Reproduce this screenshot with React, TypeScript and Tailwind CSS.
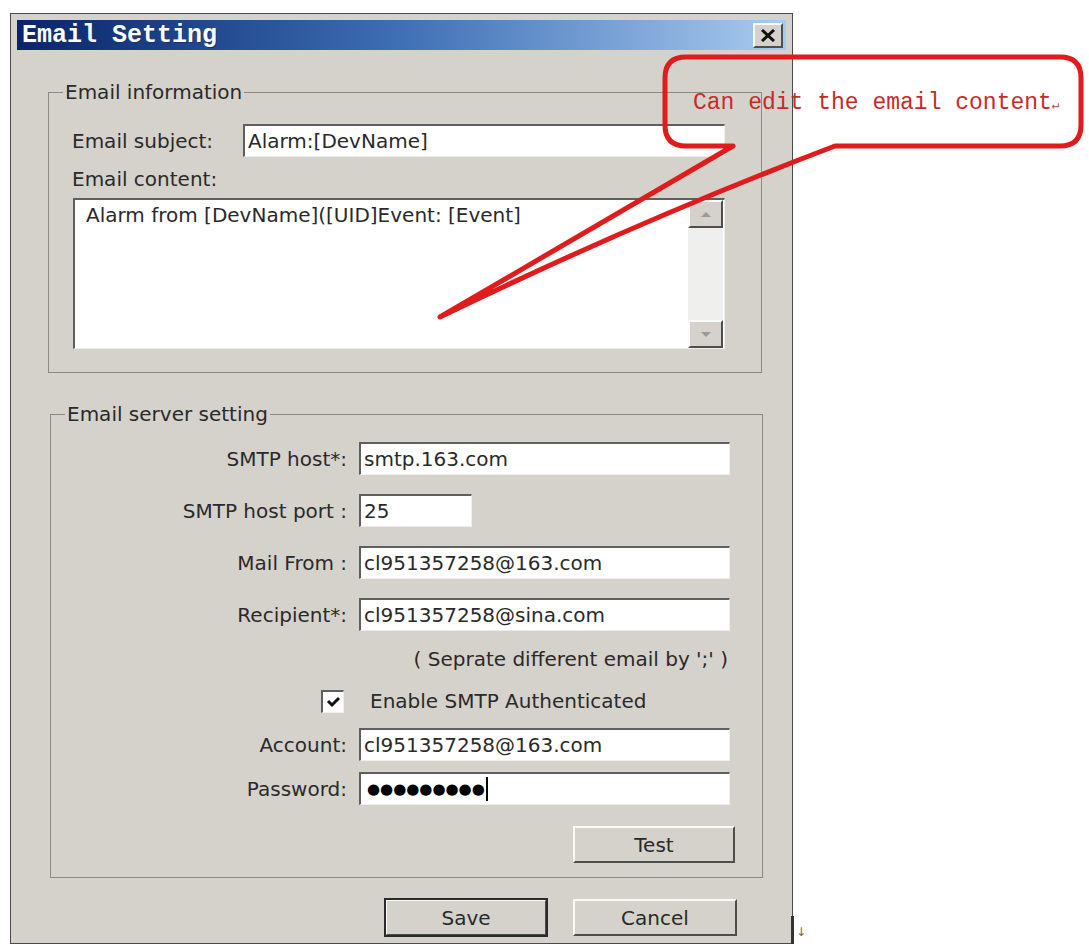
import type { ReactNode } from "react";

// classic 3D bevels
const sunken =
  "bg-white border-t-2 border-l-2 border-b border-r border-t-[#5f5f5f] border-l-[#5f5f5f] border-b-[#efeeeb] border-r-[#efeeeb]";
const raised =
  "bg-[#d5d2cc] border-2 border-t-[#fafafa] border-l-[#fafafa] border-b-[#4e4e4e] border-r-[#4e4e4e]";

function TextBox({ children, className }: { children: ReactNode; className: string }) {
  return (
    <div className={`${sunken} h-[33px] flex items-center pl-[3px] text-[20px] leading-none ${className}`}>
      {children}
    </div>
  );
}

function ServerRow({ label, children }: { label: string; children: ReactNode }) {
  return (
    <div className="flex items-center">
      <span className="w-[296px] text-right leading-[24px]">{label}</span>
      <div className="ml-[12px]">{children}</div>
    </div>
  );
}

function Button({ label, primary = false, className = "" }: { label: string; primary?: boolean; className?: string }) {
  return (
    <div
      className={`${raised} h-[37px] flex items-center justify-center text-[20px] ${
        primary ? "outline-2 outline-[#2a2a2a] -outline-offset-1" : ""
      } ${className}`}
    >
      {label}
    </div>
  );
}

function ArrowButton({ up }: { up?: boolean }) {
  return (
    <div className={`${raised} h-[28px] flex items-center justify-center`}>
      <svg width="12" height="7" viewBox="0 0 12 7">
        {up ? (
          <path d="M1 6 L6 1 L11 6 Z" fill="#9a9a9a" />
        ) : (
          <path d="M1 1 L6 6 L11 1 Z" fill="#9a9a9a" />
        )}
      </svg>
    </div>
  );
}

export default function App() {
  return (
    <div className="relative min-h-screen bg-white pt-[13px] pl-[10px] font-['DejaVu_Sans',sans-serif] text-[#2a2a2a]">
      <div className="flex items-end">
        {/* dialog window */}
        <div className="w-[783px] border border-[#4a4a4a] bg-[#d5d2cc] px-[6px] pt-[6px] pb-[7px]">
          {/* title bar */}
          <div className="h-[30px] flex items-center justify-between pl-[5px] pr-[3px] bg-linear-to-r from-[#0a246a] via-[#3f6fb5] to-[#a9cbee]">
            <span className="font-['Liberation_Mono',monospace] font-bold text-[25px] leading-none text-white [text-shadow:1px_1px_0_#1b2f6a]">
              Email Setting
            </span>
            <div className={`${raised} w-[30px] h-[25px] flex items-center justify-center`}>
              <svg width="16" height="13" viewBox="0 0 16 13">
                <path d="M2 1 L14 12 M14 1 L2 12" stroke="#111" strokeWidth="3" />
              </svg>
            </div>
          </div>

          {/* Email information */}
          <fieldset className="ml-[31px] mt-[30px] w-[714px] border border-[#8c8983]">
            <legend className="ml-[14px] px-[2px] text-[20px] leading-[24px]">Email information</legend>
            <div className="pl-[23px] pt-[20px] pb-[23px] text-[20px]">
              <div className="flex items-center">
                <span className="w-[171px] leading-[24px]">Email subject:</span>
                <TextBox className="w-[482px] h-[32px]">Alarm:[DevName]</TextBox>
              </div>
              <div className="mt-[10px] leading-[24px]">Email content:</div>
              <div className={`${sunken} mt-[7px] ml-[1px] w-[652px] h-[151px] flex`}>
                <div className="flex-1 pl-[11px] pt-[3px] leading-[24px]">
                  Alarm from [DevName]([UID]Event: [Event]
                </div>
                <div className="w-[35px] flex flex-col bg-[#efefed] mr-[1px]">
                  <ArrowButton up />
                  <div className="flex-1" />
                  <ArrowButton />
                </div>
              </div>
            </div>
          </fieldset>

          {/* Email server setting */}
          <fieldset className="ml-[33px] mt-[29px] w-[713px] border border-[#8c8983]">
            <legend className="ml-[14px] px-[2px] text-[20px] leading-[24px]">Email server setting</legend>
            <div className="pt-[16px] pb-[14px] text-[20px]">
              <div className="flex flex-col gap-[19px]">
                <ServerRow label="SMTP host*:">
                  <TextBox className="w-[371px]">smtp.163.com</TextBox>
                </ServerRow>
                <ServerRow label="SMTP host port :">
                  <TextBox className="w-[113px]">25</TextBox>
                </ServerRow>
                <ServerRow label="Mail From :">
                  <TextBox className="w-[371px]">cl951357258@163.com</TextBox>
                </ServerRow>
                <ServerRow label="Recipient*:">
                  <TextBox className="w-[371px]">cl951357258@sina.com</TextBox>
                </ServerRow>
              </div>
              <div className="mt-[16px] flex justify-end pr-[34px] leading-[24px]">( Seprate different email by ';' )</div>
              <div className="mt-[18px] flex items-center h-[24px]">
                <div className="w-[270px]" />
                <div className={`${sunken} w-[23px] h-[23px] flex items-center justify-center`}>
                  <svg width="15" height="12" viewBox="0 0 15 12">
                    <path d="M2 5 L6 9 L13 2" fill="none" stroke="#111" strokeWidth="3" />
                  </svg>
                </div>
                <span className="ml-[26px] leading-[24px]">Enable SMTP Authenticated</span>
              </div>
              <div className="mt-[15px]">
                <ServerRow label="Account:">
                  <TextBox className="w-[371px]">cl951357258@163.com</TextBox>
                </ServerRow>
              </div>
              <div className="mt-[11px]">
                <ServerRow label="Password:">
                  <TextBox className="w-[371px]">
                    <span className="text-[15px] text-black pl-[3px]">●●●●●●●●●</span>
                    <span className="w-[2px] h-[24px] bg-black ml-[1px]" />
                  </TextBox>
                </ServerRow>
              </div>
              <div className="mt-[21px] flex justify-end pr-[27px]">
                <Button label="Test" className="w-[162px]" />
              </div>
            </div>
          </fieldset>

          {/* dialog buttons */}
          <div className="mt-[21px] flex gap-[26px] pl-[368px]">
            <Button label="Save" primary className="w-[162px]" />
            <Button label="Cancel" className="w-[164px]" />
          </div>
        </div>
        <span className="w-[3px] h-[28px] bg-[#333] -ml-[2px]" />
        <span className="ml-[2px] mb-[6px] text-[12px] leading-none text-[#666]">↓</span>
      </div>

      {/* red callout annotation */}
      <svg
        className="absolute left-0 top-0 pointer-events-none"
        width="1089"
        height="948"
        viewBox="0 0 1089 948"
      >
        <path
          d="M733 146 L686 146 Q665 146 665 125 L665 78 Q665 57 686 57 L1060 57 Q1081 57 1081 78 L1081 125 Q1081 146 1060 146 L835 146 Q640 220 440 317 Z"
          fill="none"
          stroke="#e01b1b"
          strokeWidth="5"
          strokeLinejoin="round"
        />
      </svg>
      <span className="absolute left-[693px] top-[90px] font-['Liberation_Mono',monospace] text-[23px] leading-[26px] text-[#c62b2b] whitespace-nowrap">
        Can edit the email content<span className="text-[13px] text-[#b05050]">↵</span>
      </span>
    </div>
  );
}
